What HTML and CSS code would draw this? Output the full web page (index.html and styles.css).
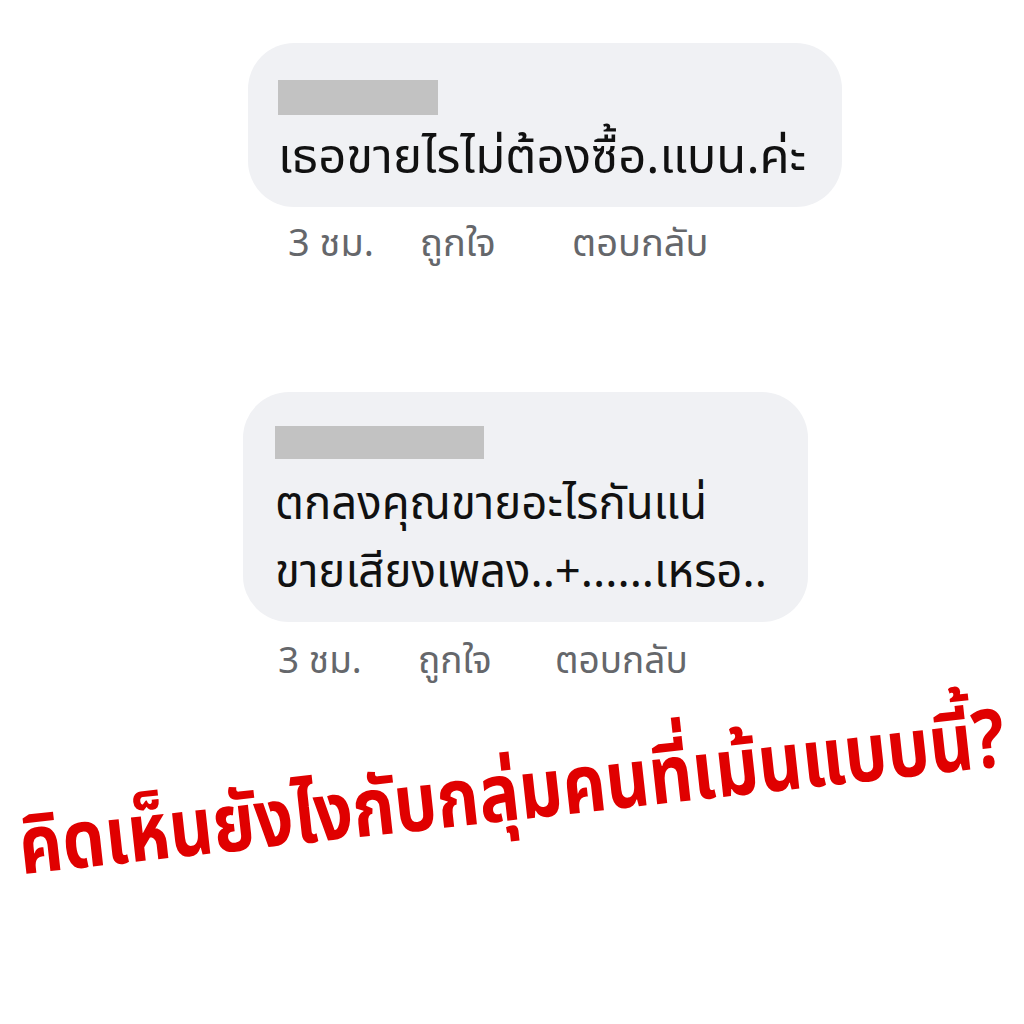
FILE: index.html
```html
<!DOCTYPE html>
<html lang="th">
<head>
  <meta charset="UTF-8">
  <title>Comments</title>
  <link rel="stylesheet" href="styles.css">
</head>
<body>
  <div class="page">
    <div class="comment c1">
      <div class="bubble">
        <div class="name-blur"></div>
        <div class="text">เธอขายไรไม่ต้องซื้อ.แบน.ค่ะ</div>
      </div>
      <div class="meta">
        <span class="time">3 ชม.</span>
        <span class="like">ถูกใจ</span>
        <span class="reply">ตอบกลับ</span>
      </div>
    </div>

    <div class="comment c2">
      <div class="bubble">
        <div class="name-blur"></div>
        <div class="text">ตกลงคุณขายอะไรกันแน่<br>ขายเสียงเพลง..+......เหรอ..</div>
      </div>
      <div class="meta">
        <span class="time">3 ชม.</span>
        <span class="like">ถูกใจ</span>
        <span class="reply">ตอบกลับ</span>
      </div>
    </div>

    <div class="headline">คิดเห็นยังไงกับกลุ่มคนที่เม้นแบบนี้?</div>
  </div>
</body>
</html>
```

FILE: styles.css
```css
body {
  margin: 0;
  background: #fff;
  font-family: "Noto Sans Thai", "DejaVu Sans", sans-serif;
}

.page {
  width: 1024px;
  height: 1024px;
  overflow: hidden;
}

.comment {
  display: flex;
  flex-direction: column;
  align-items: flex-start;
}

.c1 {
  padding: 43px 0 0 248px;
}

.c2 {
  padding: 123px 0 0 243px;
}

.bubble {
  background: #f0f1f4;
  border-radius: 46px;
  padding: 37px 30px 17px 30px;
}

.c1 .bubble {
  width: 534px;
}

.c2 .bubble {
  width: 503px;
  padding: 34px 30px 15px 32px;
}

.name-blur {
  background: #c2c2c2;
  width: 160px;
  height: 35px;
}

.c2 .name-blur {
  width: 209px;
  height: 33px;
}

.text {
  font-size: 49px;
  line-height: 64px;
  color: #111;
  margin-top: 11px;
  white-space: nowrap;
}

.c2 .text {
  font-size: 45.5px;
  line-height: 68px;
  margin-top: 12px;
}

.meta {
  display: flex;
  font-size: 38px;
  line-height: 48px;
  color: #65676b;
  padding: 14px 0 0 40px;
  white-space: nowrap;
}

.time {
  width: 132px;
}

.like {
  width: 152px;
}

.c2 .meta {
  font-size: 37px;
  padding: 16px 0 0 35px;
}

.c2 .time {
  width: 140px;
}

.c2 .like {
  width: 137px;
}

.headline {
  margin: 127px 0 0 25px;
  color: #e00000;
  font-size: 67.5px;
  line-height: 90px;
  font-weight: bold;
  white-space: nowrap;
  transform-origin: left bottom;
  transform: rotate(-6.3deg) scale(1, 1.2);
}
```
